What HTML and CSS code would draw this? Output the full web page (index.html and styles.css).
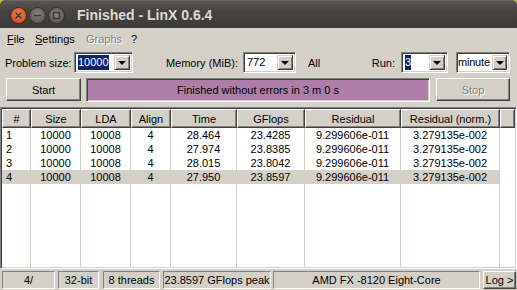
FILE: index.html
```html
<!DOCTYPE html>
<html>
<head>
<meta charset="utf-8">
<link rel="stylesheet" href="styles.css">
</head>
<body>
<div class="window">
  <div class="titlebar">
    <div class="wbtns">
      <svg class="wb" width="17" height="17" viewBox="0 0 17 17">
        <defs><radialGradient id="gc" cx="50%" cy="40%" r="60%"><stop offset="0" stop-color="#f6835a"/><stop offset="1" stop-color="#d9491c"/></radialGradient></defs>
        <circle cx="8.5" cy="8.5" r="8" fill="url(#gc)" stroke="#3a2a22" stroke-width="1"/>
        <path d="M6 6 L11 11 M11 6 L6 11" stroke="#3c3b37" stroke-width="1.6" stroke-linecap="round"/>
      </svg>
      <svg class="wb" width="17" height="17" viewBox="0 0 17 17">
        <defs><radialGradient id="gm" cx="50%" cy="40%" r="60%"><stop offset="0" stop-color="#85847f"/><stop offset="1" stop-color="#5a5955"/></radialGradient></defs>
        <circle cx="8.5" cy="8.5" r="8" fill="url(#gm)" stroke="#2f2e2b" stroke-width="1"/>
        <path d="M5 8.5 H12" stroke="#3c3b37" stroke-width="1.6"/>
      </svg>
      <svg class="wb" width="17" height="17" viewBox="0 0 17 17">
        <circle cx="8.5" cy="8.5" r="8" fill="url(#gm)" stroke="#2f2e2b" stroke-width="1"/>
        <rect x="5.5" y="5.5" width="6" height="6" fill="none" stroke="#3c3b37" stroke-width="1.4"/>
      </svg>
    </div>
    <div class="title">Finished - LinX 0.6.4</div>
  </div>

  <div class="menubar">
    <span class="mi mi-file"><u>F</u>ile</span>
    <span class="mi mi-set"><u>S</u>ettings</span>
    <span class="mi mi-gr dis">Graphs</span>
    <span class="mi">?</span>
  </div>

  <div class="row1">
    <span class="lbl lbl-ps">Problem size:</span>
    <div class="combo c1"><span class="val"><span class="sel">10000</span></span><span class="drop"><i></i></span></div>
    <span class="lbl lbl-mem">Memory (MiB):</span>
    <div class="combo c2"><span class="val">772</span><span class="drop"><i></i></span></div>
    <span class="lbl lbl-all"><span class="all">All</span><span class="run">Run:</span></span>
    <div class="combo c3"><span class="val"><span class="sel">3</span></span><span class="drop"><i></i></span></div>
    <div class="combo c4"><span class="val">minute</span><span class="drop"><i></i></span></div>
  </div>

  <div class="row2">
    <div class="btn start">Start</div>
    <div class="progress">Finished without errors in 3 m 0 s</div>
    <div class="btn stop dis">Stop</div>
  </div>

  <div class="list">
    <div class="grid head">
      <span>#</span><span>Size</span><span>LDA</span><span>Align</span><span>Time</span><span>GFlops</span><span>Residual</span><span>Residual (norm.)</span><span class="fill"></span>
    </div>
    <div class="grid row">
      <span class="num">1</span><span>10000</span><span>10008</span><span>4</span><span>28.464</span><span>23.4285</span><span>9.299606e-011</span><span>3.279135e-002</span><span class="fill"></span>
    </div>
    <div class="grid row">
      <span class="num">2</span><span>10000</span><span>10008</span><span>4</span><span>27.974</span><span>23.8385</span><span>9.299606e-011</span><span>3.279135e-002</span><span class="fill"></span>
    </div>
    <div class="grid row">
      <span class="num">3</span><span>10000</span><span>10008</span><span>4</span><span>28.015</span><span>23.8042</span><span>9.299606e-011</span><span>3.279135e-002</span><span class="fill"></span>
    </div>
    <div class="grid row selrow">
      <span class="num">4</span><span>10000</span><span>10008</span><span>4</span><span>27.950</span><span>23.8597</span><span>9.299606e-011</span><span>3.279135e-002</span><span class="fill"></span>
    </div>
    <div class="grid row empty">
      <span></span><span></span><span></span><span></span><span></span><span></span><span></span><span></span><span class="fill"></span>
    </div>
  </div>

  <div class="status">
    <span class="seg s1">4/</span>
    <span class="seg s2">32-bit</span>
    <span class="seg s3">8 threads</span>
    <span class="seg s4">23.8597 GFlops peak</span>
    <span class="seg s5">AMD FX -8120 Eight-Core</span>
    <span class="btn log">Log &gt;</span>
  </div>
</div>
</body>
</html>
```

FILE: styles.css
```css
* { box-sizing: border-box; margin: 0; padding: 0; }
html, body { width: 517px; height: 290px; overflow: hidden; }
body {
  background: #c9c23c;
  font-family: "Liberation Sans", Arial, sans-serif;
  font-size: 11px;
  color: #000;
}
.window {
  width: 517px;
  height: 290px;
  display: flex;
  flex-direction: column;
  background: #d4d0c8;
  border-radius: 5px 5px 0 0;
  overflow: hidden;
}

/* title bar */
.titlebar {
  height: 28px;
  flex: none;
  background: linear-gradient(#575652, #44433f 40%, #3c3b37);
  border-top: 1px solid #6a6965;
  display: flex;
  align-items: center;
  padding-left: 10px;
}
.wbtns { display: flex; gap: 2px; margin-top: 2px; }
.wb { display: block; }
.title {
  margin-left: 12px;
  font-weight: bold;
  font-size: 14px;
  color: #dfdbd2;
  margin-top: 1px;
}

/* menu */
.menubar {
  height: 20px;
  flex: none;
  display: flex;
  align-items: center;
  padding-left: 7px;
  padding-top: 1px;
}
.mi-file { width: 28px; }
.mi-set { width: 51px; }
.mi-gr { width: 45px; }
.dis { color: #808080; text-shadow: 1px 1px 0 #fff; }

/* row 1 */
.row1 {
  height: 21px;
  margin-top: 4px;
  flex: none;
  display: flex;
  align-items: center;
  padding-left: 5px;
}
.lbl { white-space: nowrap; }
.lbl-ps { width: 69px; }
.lbl-mem { width: 110px; text-align: right; padding-right: 5px; }
.lbl-all { width: 105px; display: flex; justify-content: space-between; padding-left: 12px; padding-right: 6px; }
.combo {
  height: 21px;
  background: #fff;
  border: 1px solid;
  border-color: #808080 #fff #fff #808080;
  box-shadow: inset 1px 1px 0 #404040, inset -1px -1px 0 #d4d0c8;
  display: flex;
  padding: 2px 2px 2px 2px;
}
.c1 { width: 59px; }
.c2 { width: 53px; }
.c3 { width: 47px; }
.c4 { width: 54px; margin-left: 8px; padding-left: 1px; }
.c4 .val { padding-left: 0; letter-spacing: -0.2px; }
.val { flex: 1; line-height: 15px; padding-left: 1px; overflow: hidden; white-space: nowrap; }
.sel { background: #0a246a; color: #fff; display: inline-block; height: 15px; }
.drop {
  width: 16px;
  height: 15px;
  flex: none;
  background: #d4d0c8;
  border: 1px solid;
  border-color: #d4d0c8 #404040 #404040 #d4d0c8;
  box-shadow: inset 1px 1px 0 #fff, inset -1px -1px 0 #808080;
  display: flex;
  align-items: center;
  justify-content: center;
}
.c4 .drop { width: 15px; }
.drop i {
  display: block;
  width: 0;
  height: 0;
  border-left: 4px solid transparent;
  border-right: 4px solid transparent;
  border-top: 4px solid #000;
  margin-top: 1px;
}

/* row 2 */
.row2 {
  height: 24px;
  margin-top: 5px;
  flex: none;
  display: flex;
  align-items: flex-start;
}
.btn {
  background: #d4d0c8;
  border: 1px solid;
  border-color: #fff #404040 #404040 #fff;
  box-shadow: inset -1px -1px 0 #808080;
  display: flex;
  align-items: center;
  justify-content: center;
}
.start { margin-left: 6px; width: 75px; height: 23px; }
.stop { margin-left: 6px; width: 74px; height: 23px; }
.progress {
  margin-left: 5px;
  width: 344px;
  height: 24px;
  background: #ad7fa8;
  border: 1px solid;
  border-color: #808080 #fff #fff #808080;
  box-shadow: inset 1px 1px 0 #404040, inset -1px -1px 0 #d4d0c8;
  display: flex;
  align-items: center;
  justify-content: center;
}

/* list */
.list {
  margin-top: 5px;
  height: 162px;
  flex: none;
  background: #fff;
  border: 1px solid;
  border-color: #808080 #fff #fff #808080;
  box-shadow: inset 1px 1px 0 #404040, inset -1px -1px 0 #d4d0c8;
  padding: 1px;
  display: flex;
  flex-direction: column;
}
.grid {
  display: grid;
  grid-template-columns: 29px 50px 50px 40px 66px 68px 96px 99px 1fr;
}
.head { height: 19px; flex: none; }
.head span {
  background: #d4d0c8;
  border: 1px solid;
  border-color: #fff #404040 #404040 #fff;
  box-shadow: inset -1px -1px 0 #808080;
  display: flex;
  align-items: center;
  justify-content: center;
  white-space: nowrap;
}
.row { height: 14px; flex: none; }
.row span {
  border-right: 1px solid #d4d0c8;
  text-align: center;
  line-height: 14px;
  white-space: nowrap;
}
.row .num { text-align: left; padding-left: 4px; }
.row .fill { border-right: none; }
.selrow span { background: #d4d0c8; }
.selrow .fill { background: #fff; }
.row.empty { flex: 1; height: auto; }

/* status */
.status {
  margin-top: 2px;
  height: 18px;
  flex: none;
  display: flex;
  padding-left: 2px;
}
.seg {
  border: 1px solid;
  border-color: #808080 #fff #fff #808080;
  display: flex;
  align-items: center;
  justify-content: center;
  white-space: nowrap;
}
.s1 { width: 53px; }
.s2 { width: 41px; margin-left: 3px; }
.s3 { width: 57px; margin-left: 4px; }
.s4 { width: 108px; margin-left: 3px; }
.s5 { width: 207px; margin-left: 2px; }
.log { width: 33px; margin-left: 3px; }
```
